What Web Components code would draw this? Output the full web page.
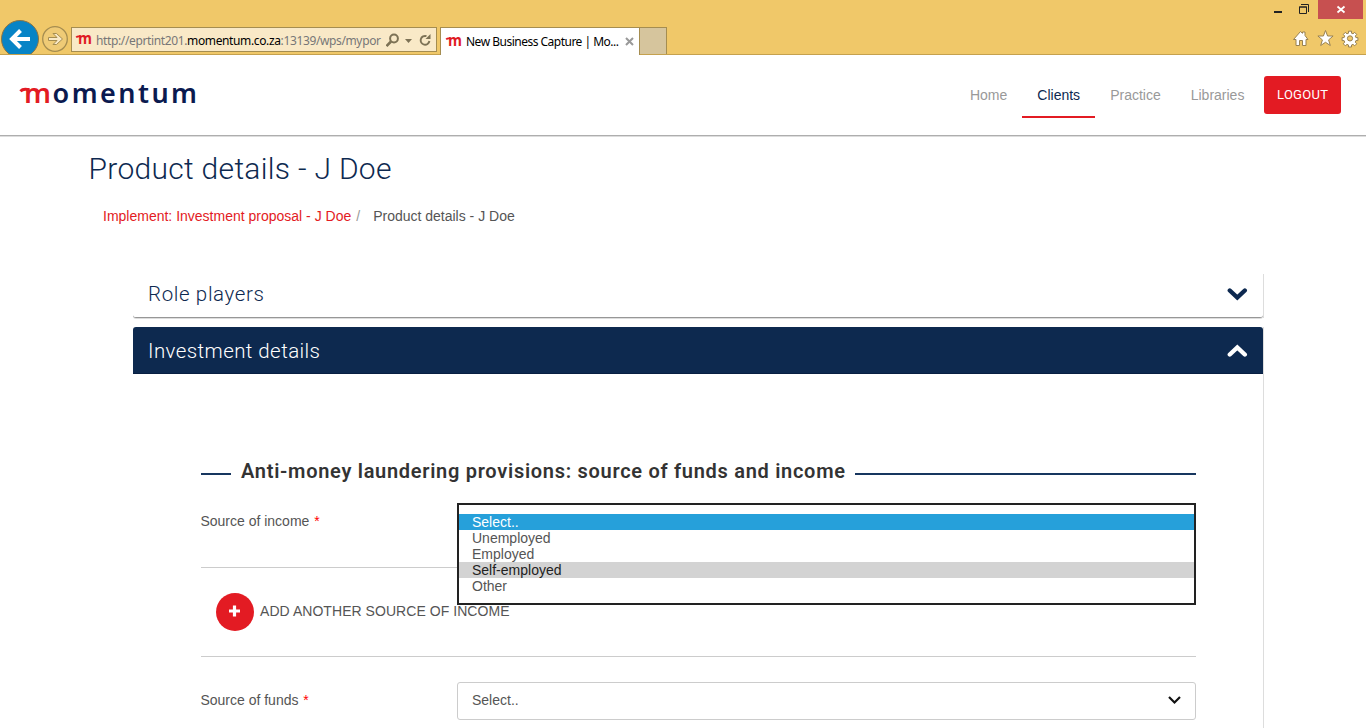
<!DOCTYPE html>
<html lang="en">
<head>
<meta charset="utf-8">
<title>New Business Capture | Momentum</title>
<style>
html,body{margin:0;height:728px;overflow:hidden;background:#fff}
body{font:14px/20px "Liberation Sans",Arial,sans-serif;color:#555}
</style>
</head>
<body>
<browser-chrome></browser-chrome>
<site-header></site-header>
<product-page></product-page>
<script>
const define=(name,html,setup)=>customElements.define(name,class extends HTMLElement{
  connectedCallback(){
    if(this.shadowRoot)return;
    const t=document.createElement('template');t.innerHTML=html;
    this.attachShadow({mode:'open'}).append(t.content.cloneNode(true));
    if(setup)setup(this,this.shadowRoot);
  }
});

/* Text tracked out or in to a given measure. */
define('tracked-text',`<style>:host{display:block;white-space:pre;flex:none}span{display:inline-block}</style><span><slot></slot></span>`,(el,root)=>{
  const w=+el.getAttribute('w'),s=root.querySelector('span');
  const n=el.textContent.length,natural=s.getBoundingClientRect().width;
  s.style.letterSpacing=((w-natural)/(n-1))+'px';
  el.style.width=w+'px';
});

/* Brand letter with its leading stroke. */
define('brand-m',`<style>:host{display:block;width:16px;height:16px;flex:none}svg{display:block;overflow:visible}</style>
<svg width="16" height="16" viewBox="0 0 16 16"><path d="M.2 5.400Q1.500 3.800 5 4.600" fill="none" stroke="#e01b24" stroke-width="1.700"/><text x="2" y="12" font-family="Open Sans,sans-serif" font-weight="700" font-size="15.500" textLength="14" lengthAdjust="spacingAndGlyphs" fill="#e01b24">m</text></svg>`);

define('brand-logo',`<style>:host{display:block;width:178px;height:24px}svg{display:block;overflow:visible}</style>
<svg width="178" height="24" viewBox="0 0 178 24" font-family="Noto Sans,sans-serif" font-size="27">
<path d="M.4 8.200Q3.500 5 9.500 7" fill="none" stroke="#e31b23" stroke-width="3"/>
<text x="4" y="20.200" font-weight="600" textLength="27" lengthAdjust="spacingAndGlyphs" fill="#e31b23">m</text>
<text x="32.500" y="20.200" font-weight="600" textLength="144.500" lengthAdjust="spacing" fill="#0b1a4f">omentum</text></svg>`);

define('browser-chrome',`<style>
:host{display:flex;box-sizing:border-box;height:55px;background:#f0c869;border-bottom:1px solid #c5a14e;font:12px/16px "Noto Sans",sans-serif;color:#777}
.nav{width:71px;flex:none}svg{display:block;flex:none}
.addr{display:flex;align-items:center;box-sizing:border-box;width:366px;height:25px;margin-top:27px;border:1px solid #a58d50;background:#f9e9c7;padding-left:4px}
.addr tracked-text{margin:2px 5px 0 4px}b{font-weight:400;color:#000}
.tab{display:flex;align-items:center;box-sizing:border-box;width:200px;height:28px;margin:27px 0 0 3px;border:solid #a58d50;border-width:1px 1px 0;background:#fff;color:#000;padding-left:5px}
.tab tracked-text{margin:1px 6px 0 4px}
.new{box-sizing:border-box;width:27px;height:27px;margin-top:27px;border:solid #a58d50;border-width:1px 1px 0 0;background:#d6c59d}
.right{margin-left:auto;width:110px}
</style>
<svg class="nav" width="71" height="54" viewBox="0 0 71 54"><circle cx="20" cy="39" r="18.500" fill="#0784c6" stroke="#8a7445" stroke-width="1"/><path d="M30 39H12.500M20.500 30.500L12 39l8.500 8.500" fill="none" stroke="#fff" stroke-width="4"/><circle cx="55" cy="39" r="12.300" fill="#efcb76" stroke="#a58d50" stroke-width="1.300"/><path d="M48.500 37.500H57L53 33.500h3.500L62.500 39l-6 5.500H53l4-4h-8.500z" fill="#f9e9c7" stroke="#a58d50" stroke-width="1"/></svg>
<div class="addr"><brand-m></brand-m><tracked-text w="285">http://eprtint201.<b>momentum.co.za</b>:13139/wps/mypor</tracked-text>
<svg width="50" height="22" viewBox="386 28 50 22" fill="none" stroke="#7d7255"><circle cx="394" cy="37.500" r="3.900" stroke-width="2"/><path d="M391 40.500l-4.500 4.500" stroke-width="2.600"/><path d="M405 38h7l-3.500 4z" fill="#7d7255" stroke="none"/><path d="M426.500 35.200A4.400 4.400 0 1 0 429.400 40" stroke-width="1.900"/><path d="M430.500 33v5h-5z" fill="#7d7255" stroke="none"/></svg></div>
<div class="tab"><brand-m></brand-m><tracked-text w="153">New Business Capture | Mo...</tracked-text><svg width="9" height="9" viewBox="0 0 9 9"><path d="M1 1l7 7M8 1L1 8" stroke="#999" stroke-width="2"/></svg></div>
<div class="new"></div>
<svg class="right" width="110" height="54" viewBox="1256 0 110 54"><path d="M1318 0h45v19h-45z" fill="#c75050"/><path d="M1337.500 6.500l7 6M1344.500 6.500l-7 6" stroke="#fff" stroke-width="1.800"/><path d="M1274 11h8v2h-8z" fill="#222"/><path d="M1299.500 7v6.500h7V7zM1299 7h8M1301 4.500h7.500V12" fill="none" stroke="#222"/>
<g fill="#fff" stroke="#988151"><path d="M1293.500 39.500l7-8 2 1.800v-1.300h2.500v3.500l3 4h-2v6h-3.500v-5h-3v5h-3.500v-6z"/><path d="M1325.500 30.500l2.100 5.500h5.500l-4.500 3.900 1.700 5.600-4.800-3.200-4.800 3.200 1.700-5.600-4.500-3.900h5.500z"/><path transform="translate(0 -.3)" d="M1348.500 31.500h3v2l1.500.6 1.700-1.400 2 2-1.400 1.700.6 1.500h2v3h-2l-.6 1.500 1.400 1.700-2 2-1.700-1.400-1.500.6v2h-3v-2l-1.500-.6-1.700 1.400-2-2 1.400-1.700-.6-1.500h-2v-3h2l.6-1.500-1.400-1.700 2-2 1.700 1.400 1.500-.6z"/><circle cx="1350" cy="38.400" r="2.600" fill="#f0c869"/></g></svg>`);

define('nav-item',`<style>:host{display:block;box-sizing:border-box;height:42px;padding:9px 15px 0;border-bottom:2px solid transparent;color:#999;white-space:nowrap}:host([active]){color:#0d2950;border-color:#e31b23}</style><slot></slot>`);

define('site-header',`<style>
:host{display:flex;box-sizing:border-box;height:82px;border-bottom:1px solid #ddd;box-shadow:inset 0 -1px #aeaeae;padding:21px 25px 0 20px}
brand-logo{margin-top:7px}nav{display:flex;margin-left:auto}
.out{box-sizing:border-box;display:block;width:77px;height:38px;border-radius:3px;background:#e31b23;color:#fff;font:450 13px/38px Roboto,sans-serif;padding-left:13px;margin-left:4.600px}
</style><brand-logo></brand-logo><nav><nav-item>Home</nav-item><nav-item active>Clients</nav-item><nav-item>Practice</nav-item><nav-item>Libraries</nav-item></nav><div class="out"><tracked-text w="51">LOGOUT</tracked-text></div>`);

define('accordion-panel',`<style>
:host{display:block;box-sizing:border-box;width:1131px;border-right:1px solid #ddd}
header{display:flex;justify-content:space-between;align-items:center;box-sizing:border-box;height:44px;padding:0 15px 4px;border-bottom:1px solid #979797;box-shadow:0 1px #ddd;border-radius:0 0 3px 3px;color:#0d2950;font:350 20.500px/26px Roboto,sans-serif}
:host([open]) header{height:47px;background:#0d294f;color:#fff;border:0;box-shadow:inset 0 -1px #081f42;border-radius:3px 3px 0 0;padding-bottom:0}
:host([open]) path{transform:rotate(180deg);transform-origin:10.300px 7px}
</style><header><slot name="title"></slot><svg width="21" height="14" viewBox="0 0 21 14"><path d="M2.800 3.500L10.300 10.500 17.800 3.500" fill="none" stroke="currentColor" stroke-width="4.400" stroke-linecap="round"/></svg></header><slot></slot>`);

define('section-title',`<style>:host{display:flex;align-items:center;height:28px;color:#333;font:600 20px/28px Roboto,sans-serif}i{height:2px;background:#17365f;width:30px;margin:5px 10px 0 0}i:last-child{flex:1;margin:5px 0 0 10px}</style><i></i><slot></slot><i></i>`);

define('form-row',`<style>:host{display:flex;position:relative}.label{width:256px;flex:none;line-height:20px;padding-top:8px;text-indent:-.6px}em{color:#f00;font-style:normal;margin-left:1px}</style><div class="label"><slot name="label"></slot> <em>*</em></div><slot></slot>`);

define('option-list',`<style>
:host{display:block;position:absolute;z-index:1;left:256px;top:0;box-sizing:border-box;width:739px;height:102px;padding:9px 0;border:2px solid #222;background:#fff;text-indent:0}
div{height:16px;line-height:16px;padding-left:13px}.sel{background:#26a0da;color:#fff}.hover{background:#d3d3d3;color:#222}
</style><div class="sel">Select..</div><div>Unemployed</div><div>Employed</div><div class="hover">Self-employed</div><div>Other</div>`);

define('select-box',`<style>:host{display:flex;align-items:center;justify-content:space-between;box-sizing:border-box;width:739px;height:38px;border:1px solid #ccc;border-radius:3px;padding:0 14px 2px}</style><slot></slot><svg width="13" height="10" viewBox="0 0 13 10"><path d="M1 2l5.500 5.500L12 2" fill="none" stroke="#111" stroke-width="2.200"/></svg>`);

define('add-button',`<style>:host{display:flex;align-items:center;height:38px;padding-left:15px;gap:6px}div{padding-bottom:2px}</style><svg width="38" height="38" viewBox="0 0 38 38"><circle cx="19" cy="19" r="19" fill="#e31b23"/><path d="M13 18h11M18.500 12.500v11" stroke="#fff" stroke-width="3.200"/></svg><div><slot></slot></div>`);

define('product-page',`<style>
:host{display:block;height:591px;overflow:hidden}
h1{margin:0;padding:13px 0 0 88.500px;height:38px;font:350 30px/38px Roboto,sans-serif;color:#0d2950}
.crumbs{display:flex;padding:18px 0 0 103px;height:49px;color:#555}.crumbs .link{color:#e31b23}.crumbs i{font-style:normal;color:#999;margin:0 13px 0 5px}
.panels{display:flex;flex-direction:column;gap:9px;margin:19px 0 0 133px}
accordion-panel[open]{min-height:420px}
.body{width:995px;margin:83px 0 0 68px}
form-row.income{height:64px;margin-top:18px}
.add{border:solid #ccc;border-width:1px 0;padding-top:25px;height:63px}
form-row.funds{margin-top:25px}
</style>
<h1><tracked-text w="303">Product details - J Doe</tracked-text></h1>
<div class="crumbs"><span class="link">Implement: Investment proposal - J Doe</span><i>/</i><span>Product details - J Doe</span></div>
<div class="panels">
<accordion-panel><tracked-text slot="title" w="116">Role players</tracked-text></accordion-panel>
<accordion-panel open><tracked-text slot="title" w="172">Investment details</tracked-text>
<div class="body"><section-title><tracked-text w="604">Anti-money laundering provisions: source of funds and income</tracked-text></section-title>
<form-row class="income"><span slot="label">Source of income</span><option-list></option-list></form-row>
<div class="add"><add-button><tracked-text w="249.500">ADD ANOTHER SOURCE OF INCOME</tracked-text></add-button></div>
<form-row class="funds"><span slot="label">Source of funds</span><select-box>Select..</select-box></form-row></div>
</accordion-panel></div>`);
</script>
</body>
</html>
